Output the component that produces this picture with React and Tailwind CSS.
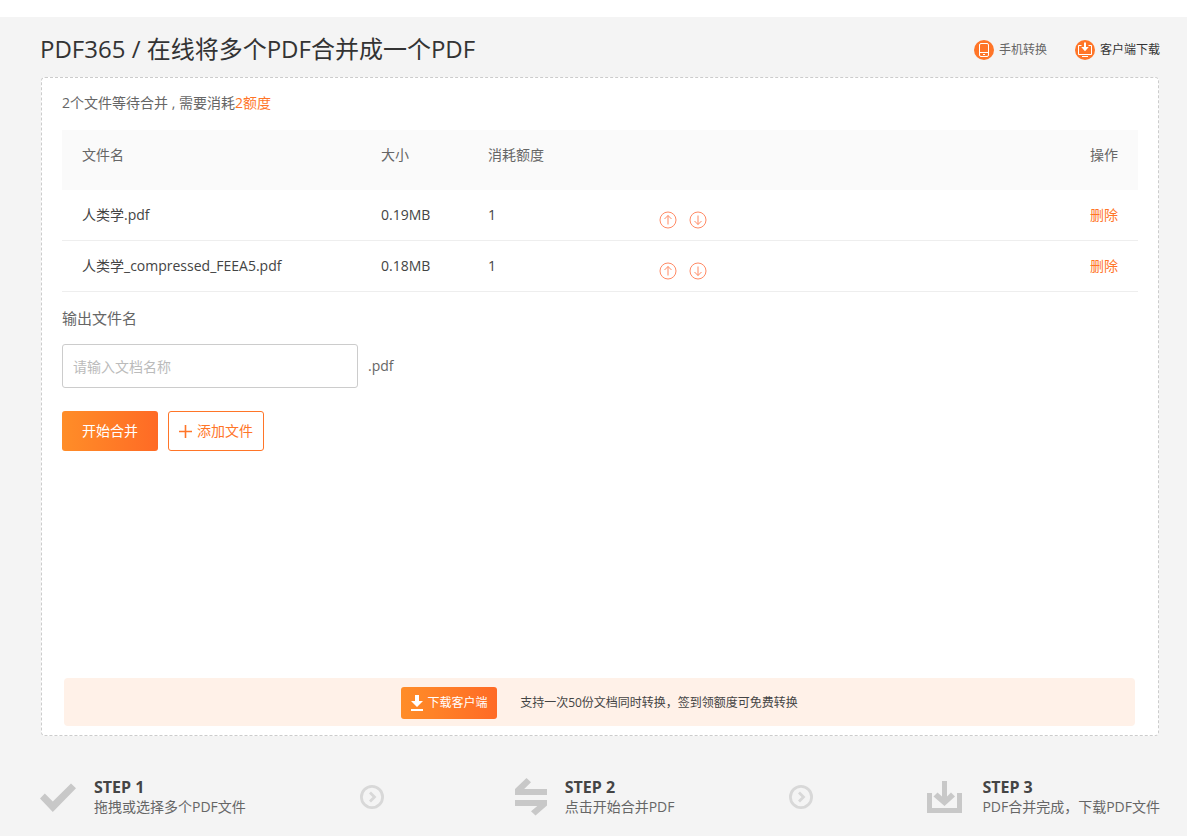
const FILES = [
  { name: '人类学.pdf', size: '0.19MB', cost: 1 },
  { name: '人类学_compressed_FEEA5.pdf', size: '0.18MB', cost: 1 },
];

function PhoneIcon() {
  return (
    <svg className="size-5" viewBox="0 0 20 20" fill="none" aria-hidden="true">
      <circle cx="10" cy="10" r="10" fill="#ff7528" />
      <rect x="5.5" y="3.5" width="9" height="13" rx="1.5" stroke="#fff" />
      <path d="M5.5 12.5h9" stroke="#fff" />
      <path d="M9 14.5h2" stroke="#fff" />
    </svg>
  );
}

function ClientIcon() {
  return (
    <svg className="size-5" viewBox="0 0 20 20" fill="none" aria-hidden="true">
      <circle cx="10" cy="10" r="10" fill="#ff7528" />
      <path d="M6.5 5.5h-3v9h13v-9h-3" stroke="#fff" />
      <path d="M7 16.5h6" stroke="#fff" />
      <path d="M9 2.5h2V7h2.8L10 11.2 6.2 7H9z" fill="#fff" />
    </svg>
  );
}

function MoveIcon({ down }) {
  return (
    <svg className="size-[18px]" viewBox="0 0 18 18" fill="none" stroke="#ff8a65" aria-hidden="true">
      <circle cx="9" cy="9" r="8" />
      {down ? (
        <path d="M9 4.5v9M5.5 10 9 13.5l3.5-3.5" />
      ) : (
        <path d="M9 13.5v-9M5.5 8 9 4.5 12.5 8" />
      )}
    </svg>
  );
}

function StepArrow() {
  return (
    <svg className="size-6 shrink-0" viewBox="0 0 24 24" fill="none" stroke="#d8d8d8" aria-hidden="true">
      <circle cx="12" cy="12" r="10.6" strokeWidth="2.8" />
      <path d="m10 7.5 4.5 4.5-4.5 4.5" strokeWidth="2.8" />
    </svg>
  );
}

function CheckIcon() {
  return (
    <svg className="size-9" viewBox="0 0 36 36" fill="#c8c8c8" aria-hidden="true">
      <path d="M0 19.5 4.8 14.5l8 8L31 4.5l5 4.8L12.8 33z" />
    </svg>
  );
}

function SwapIcon() {
  return (
    <svg className="h-10 w-8" viewBox="0 0 32 40" fill="#c8c8c8" aria-hidden="true">
      <path d="M0 18v-6L11.5 1l4.5 4.3L9.2 12H32v6z" />
      <path d="M32 23v5.5L20.5 38.5 16 34.2 22.3 29H0v-6z" />
    </svg>
  );
}

function TrayIcon() {
  return (
    <svg className="h-9 w-[35px]" viewBox="0 0 35 36" fill="#c8c8c8" aria-hidden="true">
      <path d="M0 14h5v15h25V14h5v20H0z" />
      <path d="M15 2h5v15.5l4-4 4 4L17.5 27 6.5 17.5l4-4 4.5 4z" />
    </svg>
  );
}

function Step({ icon, title, text, className }) {
  return (
    <li className={className}>
      {icon}
      <div>
        <h2 className="text-base leading-5 font-bold text-[#444]">{title}</h2>
        <p className="text-sm leading-5 text-[#666]">{text}</p>
      </div>
    </li>
  );
}

export default function App() {
  return (
    <div className="min-h-screen bg-white pt-[17px] font-['Open_Sans','Noto_Sans_CJK_SC',sans-serif] text-sm text-[#444]">
      <div className="bg-[#f4f4f4] pr-[27px] pb-[19px] pl-10">
        <header className="flex h-[60px] items-center justify-between pt-1">
          <h1 className="text-2xl text-[#333]">PDF365 / 在线将多个PDF合并成一个PDF</h1>
          <nav className="flex items-center gap-7 pt-0.5 text-xs">
            <a href="#mobile" className="flex items-center gap-[5px] text-[#666]">
              <PhoneIcon />
              手机转换
            </a>
            <a href="#client" className="flex items-center gap-[5px] text-[#333]">
              <ClientIcon />
              客户端下载
            </a>
          </nav>
        </header>

        <main className="mx-px flex min-h-[659px] flex-col rounded border border-dashed border-[#ccc] bg-white px-5 pb-[9px]">
          <p className="pt-[15px] leading-5 text-[#666]">
            2个文件等待合并 , 需要消耗<span className="text-[#ff7528]">2额度</span>
          </p>

          <table className="mt-[17px] w-full table-fixed border-separate border-spacing-0 text-left">
            <thead className="bg-[#fafafa] text-[#666]">
              <tr className="h-[60px]">
                <th scope="col" className="w-[319px] pb-2.5 pl-5 font-normal">文件名</th>
                <th scope="col" className="w-[107px] pb-2.5 font-normal">大小</th>
                <th scope="col" className="w-[171px] pb-2.5 font-normal">消耗额度</th>
                <td></td>
                <th scope="col" className="w-[100px] pr-5 pb-2.5 text-right font-normal">操作</th>
              </tr>
            </thead>
            <tbody className="[&_td]:border-b [&_td]:border-[#eee]">
              {FILES.map((file) => (
                <tr key={file.name} className="h-[51px]">
                  <td className="pl-5">{file.name}</td>
                  <td>{file.size}</td>
                  <td>{file.cost}</td>
                  <td>
                    <div className="flex gap-3 pt-2.5">
                      <button type="button" aria-label="上移"><MoveIcon /></button>
                      <button type="button" aria-label="下移"><MoveIcon down /></button>
                    </div>
                  </td>
                  <td className="pr-5 text-right">
                    <button type="button" className="text-[#ff7528]">删除</button>
                  </td>
                </tr>
              ))}
            </tbody>
          </table>

          <label htmlFor="output" className="mt-4 text-[15px] leading-5 text-[#666]">输出文件名</label>
          <div className="mt-4 flex items-center gap-2.5 text-[#666]">
            <input
              id="output"
              type="text"
              placeholder="请输入文档名称"
              className="h-11 w-[296px] rounded-[3px] border border-[#ccc] bg-white px-2.5 placeholder:text-[#bbb]"
            />
            <span>.pdf</span>
          </div>

          <div className="mt-[23px] flex gap-2.5">
            <button type="button" className="h-10 w-24 rounded-[3px] bg-linear-to-r from-[#ff8d28] to-[#ff6a25] text-white">
              开始合并
            </button>
            <button
              type="button"
              className="flex h-10 w-24 items-center justify-center gap-[5px] rounded-[3px] border border-[#ff7528] text-[#ff7528]"
            >
              <svg className="size-[13px]" viewBox="0 0 13 13" stroke="currentColor" strokeWidth="1.6" aria-hidden="true">
                <path d="M6.5 0v13M0 6.5h13" />
              </svg>
              添加文件
            </button>
          </div>

          <div className="mt-auto mr-[3px] ml-0.5 flex h-12 items-center justify-center gap-[23px] rounded bg-[#fff1e8] pt-0.5 text-xs">
            <a
              href="#download"
              className="flex h-8 w-24 items-center justify-center gap-[5px] rounded-[3px] bg-linear-to-r from-[#ff8d28] to-[#ff6a25] text-white"
            >
              <svg className="h-4 w-3" viewBox="0 0 12 16" fill="#fff" aria-hidden="true">
                <path d="M4 0h4v6h4l-6 6-6-6h4zM0 14h12v2H0z" />
              </svg>
              下载客户端
            </a>
            <p>支持一次50份文档同时转换，签到领额度可免费转换</p>
          </div>
        </main>

        <ol className="flex items-center justify-between pt-[41px]">
          <Step className="flex items-center gap-[18px]" icon={<CheckIcon />} title="STEP 1" text="拖拽或选择多个PDF文件" />
          <li><StepArrow /></li>
          <Step className="flex items-center gap-[18px] pl-4" icon={<SwapIcon />} title="STEP 2" text="点击开始合并PDF" />
          <li><StepArrow /></li>
          <Step className="flex items-center gap-5" icon={<TrayIcon />} title="STEP 3" text="PDF合并完成，下载PDF文件" />
        </ol>
      </div>
    </div>
  );
}
